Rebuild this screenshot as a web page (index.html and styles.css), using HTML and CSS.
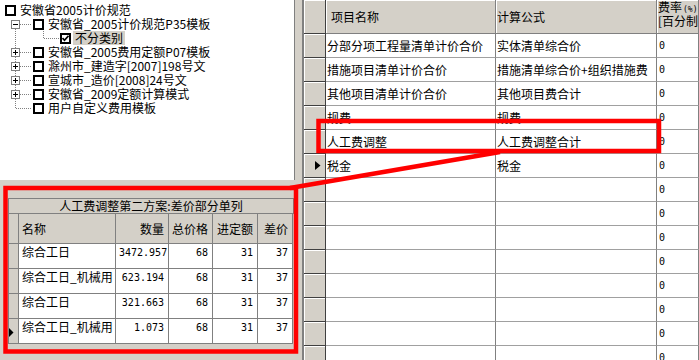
FILE: index.html
```html
<!DOCTYPE html>
<html lang="zh-CN">
  <head>
    <meta charset="UTF-8" />
    <title>费用模板</title>
    <link rel="stylesheet" href="styles.css">
  </head>
  <body>
    <div class="app">
      <div class="left">
        <div class="tree">
          <div class="node root">
            <span class="box"></span><span class="text">安徽省2005计价规范</span>
          </div>
          <div class="node">
            <svg class="lines" width="33" height="14">
              <rect x="11.5" y="3.5" width="8" height="8" class="exp" />
              <path d="M13 7.5h5" class="sign" />
              <path d="M15.5 12v2M20 7.5h12" class="dot" />
            </svg>
            <span class="box"></span><span class="text">安徽省_2005计价规范P35模板</span>
          </div>
          <div class="node">
            <svg class="lines" width="60" height="14">
              <path d="M15.5 0v14M43.5 0v7M44 7.5h15" class="dot" />
            </svg>
            <span class="box checked">
              <svg width="7" height="7"><path d="M0.5 3l2 2.2l4-4.4" /></svg>
            </span><span class="text sel">不分类别</span>
          </div>
          <div class="node">
            <svg class="lines" width="33" height="14">
              <rect x="11.5" y="3.5" width="8" height="8" class="exp" />
              <path d="M13 7.5h5M15.5 5v5" class="sign" />
              <path d="M15.5 0v3M15.5 12v2M20 7.5h12" class="dot" />
            </svg>
            <span class="box"></span><span class="text">安徽省_2005费用定额P07模板</span>
          </div>
          <div class="node">
            <svg class="lines" width="33" height="14">
              <rect x="11.5" y="3.5" width="8" height="8" class="exp" />
              <path d="M13 7.5h5M15.5 5v5" class="sign" />
              <path d="M15.5 0v3M15.5 12v2M20 7.5h12" class="dot" />
            </svg>
            <span class="box"></span><span class="text">滁州市_建造字[2007]198号文</span>
          </div>
          <div class="node">
            <svg class="lines" width="33" height="14">
              <rect x="11.5" y="3.5" width="8" height="8" class="exp" />
              <path d="M13 7.5h5M15.5 5v5" class="sign" />
              <path d="M15.5 0v3M15.5 12v2M20 7.5h12" class="dot" />
            </svg>
            <span class="box"></span><span class="text">宣城市_造价[2008]24号文</span>
          </div>
          <div class="node">
            <svg class="lines" width="33" height="14">
              <rect x="11.5" y="3.5" width="8" height="8" class="exp" />
              <path d="M13 7.5h5M15.5 5v5" class="sign" />
              <path d="M15.5 0v3M15.5 12v2M20 7.5h12" class="dot" />
            </svg>
            <span class="box"></span><span class="text">安徽省_2009定额计算模式</span>
          </div>
          <div class="node">
            <svg class="lines" width="33" height="14">
              <path d="M15.5 0v7M16 7.5h16" class="dot" />
            </svg>
            <span class="box"></span><span class="text">用户自定义费用模板</span>
          </div>
        </div>

        <div class="detail">
          <div class="sub">
            <div class="sub-title">人工费调整第二方案:差价部分单列</div>
            <div class="srow shead">
              <div class="sc si"></div>
              <div class="sc s-name">名称</div>
              <div class="sc s-qty r">数量</div>
              <div class="sc s-tot r">总价格</div>
              <div class="sc s-quo r">进定额</div>
              <div class="sc s-dif r">差价</div>
            </div>
            <div class="srow">
              <div class="sc si"></div>
              <div class="sc s-name">综合工日</div>
              <div class="sc s-qty r num">3472.957</div>
              <div class="sc s-tot r num">68</div>
              <div class="sc s-quo r num">31</div>
              <div class="sc s-dif r num">37</div>
            </div>
            <div class="srow">
              <div class="sc si"></div>
              <div class="sc s-name">综合工日_机械用</div>
              <div class="sc s-qty r num">623.194</div>
              <div class="sc s-tot r num">68</div>
              <div class="sc s-quo r num">31</div>
              <div class="sc s-dif r num">37</div>
            </div>
            <div class="srow">
              <div class="sc si"></div>
              <div class="sc s-name">综合工日</div>
              <div class="sc s-qty r num">321.663</div>
              <div class="sc s-tot r num">68</div>
              <div class="sc s-quo r num">31</div>
              <div class="sc s-dif r num">37</div>
            </div>
            <div class="srow">
              <div class="sc si cur"><svg width="5" height="9"><path d="M0 0L4.5 4.5L0 9z" /></svg></div>
              <div class="sc s-name">综合工日_机械用</div>
              <div class="sc s-qty r num">1.073</div>
              <div class="sc s-tot r num">68</div>
              <div class="sc s-quo r num">31</div>
              <div class="sc s-dif r num">37</div>
            </div>
          </div>
        </div>
      </div>

      <div class="split"></div>

      <div class="grid">
        <div class="grow ghead">
          <div class="rh"></div>
          <div class="gc c1 hd first">项目名称</div>
          <div class="gc c2 hd">计算公式</div>
          <div class="gc c3 hd two"><span>费率<span class="pct">(%)</span></span><span>[百分制]</span></div>
        </div>
        <div class="grow"><div class="rh"></div><div class="gc c1">分部分项工程量清单计价合价</div><div class="gc c2">实体清单综合价</div><div class="gc c3 num">0</div></div>
        <div class="grow"><div class="rh"></div><div class="gc c1">措施项目清单计价合价</div><div class="gc c2">措施清单综合价+组织措施费</div><div class="gc c3 num">0</div></div>
        <div class="grow"><div class="rh"></div><div class="gc c1">其他项目清单计价合价</div><div class="gc c2">其他项目费合计</div><div class="gc c3 num">0</div></div>
        <div class="grow"><div class="rh"></div><div class="gc c1">规费</div><div class="gc c2">规费</div><div class="gc c3 num">0</div></div>
        <div class="grow"><div class="rh"></div><div class="gc c1">人工费调整</div><div class="gc c2">人工费调整合计</div><div class="gc c3 num">0</div></div>
        <div class="grow"><div class="rh cur"><svg width="6" height="9"><path d="M0 0L5.5 4.5L0 9z" /></svg></div><div class="gc c1">税金</div><div class="gc c2">税金</div><div class="gc c3 num">0</div></div>
        <div class="grow"><div class="rh"></div><div class="gc c1"></div><div class="gc c2"></div><div class="gc c3 num">0</div></div>
        <div class="grow"><div class="rh"></div><div class="gc c1"></div><div class="gc c2"></div><div class="gc c3 num">0</div></div>
        <div class="grow"><div class="rh"></div><div class="gc c1"></div><div class="gc c2"></div><div class="gc c3 num">0</div></div>
        <div class="grow"><div class="rh"></div><div class="gc c1"></div><div class="gc c2"></div><div class="gc c3 num">0</div></div>
        <div class="grow"><div class="rh"></div><div class="gc c1"></div><div class="gc c2"></div><div class="gc c3 num">0</div></div>
        <div class="grow"><div class="rh"></div><div class="gc c1"></div><div class="gc c2"></div><div class="gc c3 num">0</div></div>
        <div class="grow"><div class="rh"></div><div class="gc c1"></div><div class="gc c2"></div><div class="gc c3 num">0</div></div>
        <div class="grow"><div class="rh"></div><div class="gc c1"></div><div class="gc c2"></div><div class="gc c3 num">0</div></div>
      </div>
    </div>

    <!-- 标注：红框和连线 -->
    <svg class="marks" width="699" height="360">
      <rect x="5.5" y="188" width="290.5" height="163.5" />
      <rect x="318.5" y="121" width="340.5" height="30" />
      <path d="M290 188L500 152" />
    </svg>
  </body>
</html>
```

FILE: styles.css
```css
body {
  margin: 0;
  width: 699px;
  height: 360px;
  overflow: hidden;
  position: relative;
  background-color: #d4d0c8;
  color: #000;
  font-family: "Noto Sans CJK SC", sans-serif;
  font-size: 12px;
  line-height: 14px;
}
.app {
  display: flex;
  height: 360px;
}

/* 左侧：模板树 */
.left {
  width: 295px;
  flex: none;
  display: flex;
  flex-direction: column;
}
.tree {
  height: 180px;
  box-sizing: border-box;
  padding-top: 3px;
  background-color: #fff;
  border-right: 1px solid #808080;
}
.node {
  display: flex;
  align-items: center;
  height: 14px;
  white-space: nowrap;
}
.node.root {
  padding-left: 5px;
}
.lines {
  display: block;
  flex: none;
}
.lines .exp {
  fill: #fff;
  stroke: #808080;
  stroke-width: 1;
  shape-rendering: crispEdges;
}
.lines .sign {
  stroke: #000;
  stroke-width: 1;
  shape-rendering: crispEdges;
}
.lines .dot {
  fill: none;
  stroke: #808080;
  stroke-width: 1;
  stroke-dasharray: 1 1;
  shape-rendering: crispEdges;
}
.box {
  width: 11px;
  height: 11px;
  flex: none;
  box-sizing: border-box;
  border: 2px solid #000;
  background-color: #fff;
  display: flex;
  align-items: center;
  justify-content: center;
}
.box svg {
  display: block;
}
.box svg path {
  fill: none;
  stroke: #000;
  stroke-width: 1.7;
}
.node .text {
  margin-left: 2px;
  padding: 0 2px;
}
.node .sel {
  background-color: #d4d0c8;
}

/* 左下：差价明细 */
.detail {
  flex: 1;
  padding: 18px 0 0 8px;
}
.sub {
  width: 285px;
  border-left: 1px solid #808080;
  border-top: 1px solid #808080;
}
.sub-title {
  height: 15px;
  box-sizing: border-box;
  border-right: 1px solid #808080;
  border-bottom: 1px solid #808080;
  text-align: center;
  line-height: 14px;
}
.srow {
  display: flex;
  height: 25px;
}
.srow.shead {
  height: 30px;
}
.sc {
  box-sizing: border-box;
  flex: none;
  border-right: 1px solid #808080;
  border-bottom: 1px solid #808080;
  background-color: #fff;
  padding: 0 3px;
  line-height: 16px;
  white-space: nowrap;
  overflow: hidden;
}
.shead .sc {
  background-color: #d4d0c8;
  display: flex;
  align-items: center;
}
.shead .sc.r {
  justify-content: flex-end;
}
.sc.r {
  text-align: right;
  padding-right: 4px;
}
.sc.si {
  width: 10px;
  padding: 0;
  background-color: #d4d0c8;
}
.si.cur {
  display: flex;
  align-items: center;
  padding-top: 2px;
}
.s-name { width: 97px; }
.s-qty { width: 53px; }
.s-tot { width: 44px; }
.s-quo { width: 45px; }
.s-dif { width: 35px; }

.num {
  font-family: "DejaVu Sans Mono", monospace;
  font-size: 10px;
}
.srow .num {
  padding-top: 1px;
}

.split {
  width: 7px;
  flex: none;
}

/* 右侧：费用汇总表 */
.grid {
  flex: 1;
  border-left: 2px solid #808080;
  background-color: #fff;
  overflow: hidden;
}
.grow {
  display: flex;
  height: 24px;
}
.grow.ghead {
  height: 34px;
}
.rh {
  width: 22px;
  flex: none;
  box-sizing: border-box;
  background-color: #d4d0c8;
  border-right: 1px solid #404040;
  border-bottom: 1px solid #404040;
  box-shadow: inset 1px 1px 0 #fff;
}
.rh.cur {
  display: flex;
  align-items: center;
  padding-left: 11px;
}
.rh svg,
.si svg {
  display: block;
}
.rh svg path,
.si svg path {
  fill: #000;
}
.gc {
  box-sizing: border-box;
  flex: none;
  display: flex;
  align-items: center;
  padding-left: 1px;
  border-right: 1px solid #808080;
  border-bottom: 1px solid #a0a0a0;
  line-height: 16px;
  white-space: nowrap;
  overflow: hidden;
}
.c1 { width: 170px; }
.c2 { width: 161px; }
.c3 {
  flex: 1;
  padding-left: 2px;
}
.gc.hd {
  background-color: #d4d0c8;
  border-bottom-color: #808080;
  box-shadow: inset 1px 1px 0 #fff;
}
.gc.hd.first {
  padding-left: 5px;
}
.gc.hd.two {
  flex-direction: column;
  align-items: flex-start;
  padding-top: 1px;
  padding-left: 1px;
  line-height: 11px;
}
.pct {
  margin-left: 1px;
  font-family: "DejaVu Sans Mono", monospace;
  font-size: 8px;
}

/* 标注 */
.marks {
  position: absolute;
  left: 0;
  top: 0;
  pointer-events: none;
}
.marks rect,
.marks path {
  fill: none;
  stroke: #f00;
  stroke-width: 4.5;
}
```
